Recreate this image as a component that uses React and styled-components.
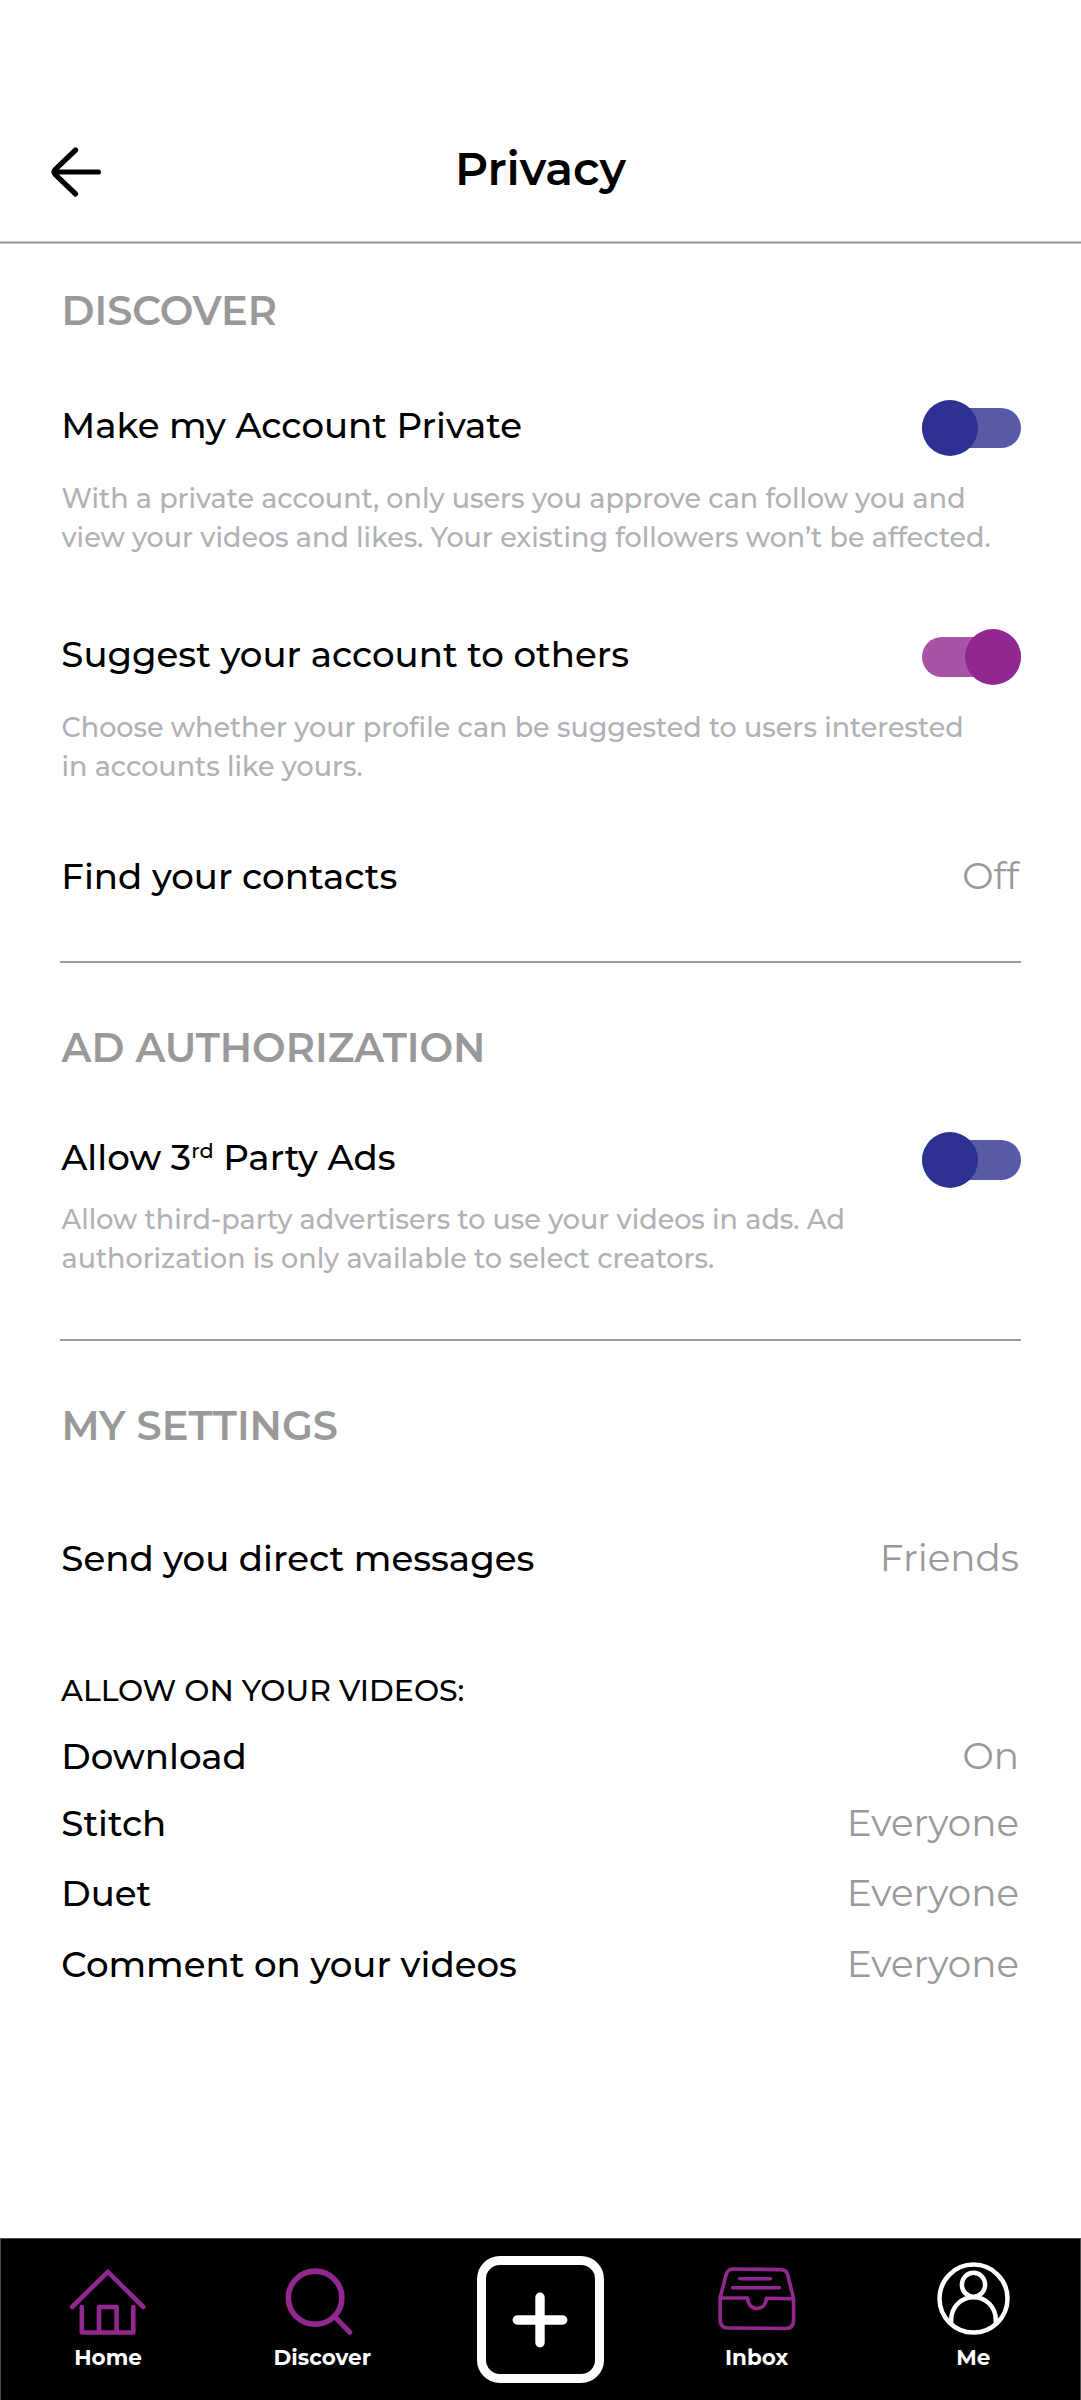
import React from "react";
import styled, { createGlobalStyle } from "styled-components";

const GlobalStyle = createGlobalStyle`
  * { box-sizing: border-box; }
  body { margin: 0; background: #fff; font-family: Montserrat, Inter, "Liberation Sans", sans-serif; }
`;

const Screen = styled.div`
  display: flex;
  flex-direction: column;
  width: 1081px;
  height: 2400px;
  background: #fff;
  color: #000;
  overflow: hidden;
`;

const Header = styled.header`
  display: grid;
  grid-template-columns: 150px 1fr 150px;
  align-items: center;
  flex: none;
  height: 241px;
  padding-top: 100px;
`;

const BackButton = styled.button`
  display: flex;
  margin: 2px 0 0 46px;
  padding: 0;
  width: 60px;
  border: 0;
  background: none;
`;

const Title = styled.h1`
  margin: 0 0 3px;
  font-size: 45.8px;
  line-height: 56px;
  font-weight: 600;
  text-align: center;
`;

const HeaderRule = styled.div`
  flex: none;
  height: 3px;
  border: solid #c6c6c6;
  border-width: 1px 0;
  background: #989898;
`;

const Content = styled.main`
  display: flex;
  flex-direction: column;
  flex: 1;
  padding: 0 60px;
`;

const SectionTitle = styled.h2`
  margin: ${(p) => p.$gap}px 0 0 1.5px;
  height: 46px;
  font-size: 39.95px;
  line-height: 45px;
  font-weight: 600;
  color: #999;
  white-space: nowrap;
`;

const Row = styled.div`
  display: flex;
  justify-content: space-between;
  align-items: flex-start;
  height: 44px;
  margin-top: ${(p) => p.$gap}px;
  white-space: nowrap;
`;

const Label = styled.span`
  margin-left: 1.3px;
  font-size: 35.6px;
  line-height: 45px;
  font-weight: 500;
`;

const Ordinal = styled.sup`
  font-size: 20.8px;
  line-height: 0;
  vertical-align: 12.5px;
`;

const Value = styled.span`
  margin-right: 2px;
  font-size: 37.3px;
  line-height: 44px;
  font-weight: 400;
  color: #999;
`;

const Description = styled.p`
  margin: ${(p) => p.$gap}px 0 0 1.5px;
  font-size: 27px;
  line-height: 39px;
  font-weight: 500;
  color: #b1b1b5;
  white-space: nowrap;
`;

const SubHeading = styled.h3`
  margin: 93px 0 0 1px;
  height: 36px;
  font-size: 29.95px;
  line-height: 35px;
  font-weight: 500;
  white-space: nowrap;
`;

const Divider = styled.div`
  flex: none;
  height: 2px;
  margin-top: ${(p) => p.$gap}px;
  background: #9c9c9c;
`;

const Track = styled.div`
  display: flex;
  align-items: center;
  justify-content: ${(p) => (p.$on ? "flex-end" : "flex-start")};
  width: 99px;
  height: 40px;
  margin-top: 5px;
  border-radius: 20px;
  background: ${(p) => (p.$on ? "#a853a4" : "#585aa8")};
`;

const Knob = styled.div`
  flex: none;
  width: 56px;
  height: 56px;
  margin-top: -1px;
  border-radius: 50%;
  background: ${(p) => (p.$on ? "#92278f" : "#2e3192")};
`;

const NavBar = styled.nav`
  display: grid;
  grid-template-columns: repeat(5, 1fr);
  flex: none;
  height: 162px;
  background: #000;
  box-shadow: inset 1px 1px 0 #4c4c4c, inset -1px 0 0 #4c4c4c;
`;

const NavItem = styled.div`
  display: flex;
  flex-direction: column;
  align-items: center;
  padding-top: 18px;
  color: ${(p) => p.$color};
`;

const NavLabel = styled.span`
  margin-top: 2px;
  margin-left: ${(p) => p.$shift || 0}px;
  font-size: 21.5px;
  line-height: 26px;
  font-weight: 700;
  color: #fff;
`;

const CreateButton = styled.button`
  display: flex;
  align-items: center;
  justify-content: center;
  width: 127px;
  height: 127px;
  padding: 0;
  border: 9px solid #fff;
  border-radius: 23px;
  background: none;
  color: #fff;
`;

const Toggle = ({ on }) => (
  <Track $on={on}>
    <Knob $on={on} />
  </Track>
);

const Icon = ({ children, stroke }) => (
  <svg width="100" height="86" viewBox="0 0 100 86" fill="none" stroke="currentColor"
    strokeWidth={stroke} strokeLinecap="round" strokeLinejoin="round">
    {children}
  </svg>
);

const PURPLE = "#92278f";

function Setting({ gap, label, value }) {
  return (
    <Row $gap={gap}>
      <Label>{label}</Label>
      <Value>{value}</Value>
    </Row>
  );
}

export default function App() {
  return (
    <>
      <GlobalStyle />
      <Screen>
        <Header>
          <BackButton aria-label="Back">
            <svg width="60" height="60" viewBox="0 0 60 60" fill="none" stroke="#000"
              strokeWidth="5.2" strokeLinecap="round" strokeLinejoin="round">
              <path d="M52.4 30H8M29.6 8L9.3 27.4Q6.6 30 9.3 32.6L29.6 52" />
            </svg>
          </BackButton>
          <Title>Privacy</Title>
        </Header>
        <HeaderRule />

        <Content>
          <SectionTitle $gap={44}>DISCOVER</SectionTitle>
          <Row $gap={69}>
            <Label>Make my Account Private</Label>
            <Toggle />
          </Row>
          <Description $gap={32}>
            With a private account, only users you approve can follow you and
            <br />
            view your videos and likes. Your existing followers won’t be affected.
          </Description>
          <Row $gap={75}>
            <Label>Suggest your account to others</Label>
            <Toggle on />
          </Row>
          <Description $gap={32}>
            Choose whether your profile can be suggested to users interested
            <br />
            in accounts like yours.
          </Description>
          <Setting gap={68} label="Find your contacts" value="Off" />
          <Divider $gap={63} />

          <SectionTitle $gap={62}>AD AUTHORIZATION</SectionTitle>
          <Row $gap={64}>
            <Label>Allow 3<Ordinal>rd</Ordinal> Party Ads</Label>
            <Toggle />
          </Row>
          <Description $gap={21}>
            Allow third-party advertisers to use your videos in ads. Ad
            <br />
            authorization is only available to select creators.
          </Description>
          <Divider $gap={61} />

          <SectionTitle $gap={62}>MY SETTINGS</SectionTitle>
          <Setting gap={87} label="Send you direct messages" value="Friends" />
          <SubHeading>ALLOW ON YOUR VIDEOS:</SubHeading>
          <Setting gap={25} label="Download" value="On" />
          <Setting gap={23} label="Stitch" value="Everyone" />
          <Setting gap={26} label="Duet" value="Everyone" />
          <Setting gap={27} label="Comment on your videos" value="Everyone" />
        </Content>

        <NavBar>
          <NavItem $color={PURPLE}>
            <Icon stroke={4.6}>
              <path d="M14.2 51L49.8 15.8L85.3 51" />
              <path d="M23.8 51V76.5H75.3V51M41 76.5V51H58.6V76.5" />
            </Icon>
            <NavLabel>Home</NavLabel>
          </NavItem>
          <NavItem $color={PURPLE}>
            <Icon stroke={5.6}>
              <ellipse cx="41.1" cy="41.7" rx="26.8" ry="26.6" />
              <path d="M61.5 61.5L75.8 76.2" strokeWidth="5.2" />
            </Icon>
            <NavLabel $shift={-4}>Discover</NavLabel>
          </NavItem>
          <NavItem $color="#fff">
            <CreateButton aria-label="Create">
              <svg width="60" height="60" viewBox="0 0 60 60" stroke="currentColor" strokeWidth="9.4" strokeLinecap="round">
                <path d="M30 7.3V52.7M7.3 30H52.7" />
              </svg>
            </CreateButton>
          </NavItem>
          <NavItem $color={PURPLE}>
            <Icon stroke={3.6}>
              <path d="M13.1 41.7L19.2 18.5Q20.6 13 26 13L74 13.6Q79.2 13.6 80.6 18.5L86.6 42.6V64Q86.6 72.5 78.5 72.5L21 72Q13.1 72 13.1 63.5V41.7L40.6 42C41 56 59 56 59.4 42.3L86.6 42.8" />
              <path d="M32.8 22.7H63.4M25.6 31.7H72.4" />
            </Icon>
            <NavLabel>Inbox</NavLabel>
          </NavItem>
          <NavItem $color="#fff">
            <Icon stroke={4.5}>
              <circle cx="50.5" cy="42.6" r="34" />
              <ellipse cx="50.5" cy="28.7" rx="11.6" ry="12" />
              <path d="M28.2 66.5V64C28.2 51 38 41.2 50.5 41.2S72.8 51 72.8 64V66.5" />
            </Icon>
            <NavLabel $shift={1}>Me</NavLabel>
          </NavItem>
        </NavBar>
      </Screen>
    </>
  );
}
